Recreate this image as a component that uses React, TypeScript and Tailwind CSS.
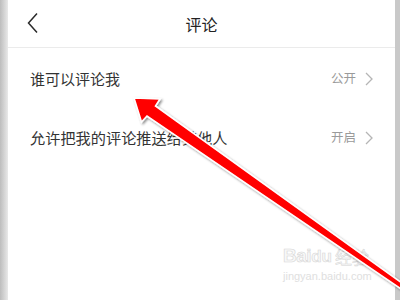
import React from "react";

const Chevron = () => (
  <svg width="8" height="14" viewBox="0 0 8 14" className="ml-[9px]">
    <path d="M1 1 L7 7 L1 13" fill="none" stroke="#b5b5b5" strokeWidth="1.3" />
  </svg>
);

export default function App() {
  const font = { fontFamily: '"Noto Sans CJK SC", "Noto Sans", sans-serif' };
  return (
    <div className="relative w-[400px] h-[300px] flex bg-white overflow-hidden" style={font}>
      <div className="w-[8px] h-full bg-gradient-to-r from-[#bdbdbd] to-[#e9e9e9]" />
      <div className="flex-1 h-full flex flex-col bg-white">
        <div className="relative h-[48px] border-b border-[#ebebeb] flex items-center justify-center">
          <svg width="12" height="22" viewBox="0 0 12 22" className="absolute left-[19px] top-[12px]">
            <path d="M10 1.5 L1.5 11 L10 20.5" fill="none" stroke="#2a2a2a" strokeWidth="1.5" />
          </svg>
          <span className="text-[16px] text-[#222] leading-none">评论</span>
        </div>
        <div className="h-[61px] flex items-center pl-[22px] pr-[22px]">
          <span className="text-[15px] text-[#333] leading-none">谁可以评论我</span>
          <span className="ml-auto text-[12.5px] text-[#9a9a9a] leading-none">公开</span>
          <Chevron />
        </div>
        <div className="h-[57px] flex items-center pl-[22px] pr-[22px]">
          <span className="text-[15.2px] text-[#333] leading-none">允许把我的评论推送给其他人</span>
          <span className="ml-auto text-[12.5px] text-[#9a9a9a] leading-none">开启</span>
          <Chevron />
        </div>
        <div className="flex-1" />
      </div>
      <div className="w-[5px] h-full bg-[#c9c9c9]" />

      <div className="absolute left-[283px] top-[246px] flex flex-col pointer-events-none">
        <div className="flex items-end leading-none">
          <span className="text-[19px] font-bold tracking-tight" style={{ fontFamily: '"Liberation Sans", sans-serif', WebkitTextStroke: "0.6px #d6d6d6", color: "#f8f8f8" }}>Bai</span>
          <span className="text-[17px] font-bold" style={{ fontFamily: '"Liberation Sans", sans-serif', WebkitTextStroke: "0.6px #d6d6d6", color: "#f8f8f8" }}>du</span>
          <span className="text-[17px] ml-[3px]" style={{ WebkitTextStroke: "0.5px #d6d6d6", color: "#f8f8f8" }}>经验</span>
        </div>
        <span className="text-[11px] mt-[3px] text-[#e0e0e0]" style={{ fontFamily: '"Liberation Sans", sans-serif' }}>jingyan.baidu.com</span>
      </div>

      <svg className="absolute left-0 top-0 pointer-events-none" width="400" height="300" viewBox="0 0 400 300">
        <defs>
          <filter id="sh" x="-10%" y="-10%" width="130%" height="130%">
            <feDropShadow dx="1.5" dy="1.5" stdDeviation="1.2" floodColor="#000" floodOpacity="0.45" />
          </filter>
        </defs>
        <polygon
          points="134,98 160,99 155.5,106 402,283 401,289 147,116 141.5,122"
          fill="#ff0000"
          stroke="#ffffff"
          strokeWidth="1.6"
          strokeLinejoin="miter"
          filter="url(#sh)"
        />
      </svg>
    </div>
  );
}
